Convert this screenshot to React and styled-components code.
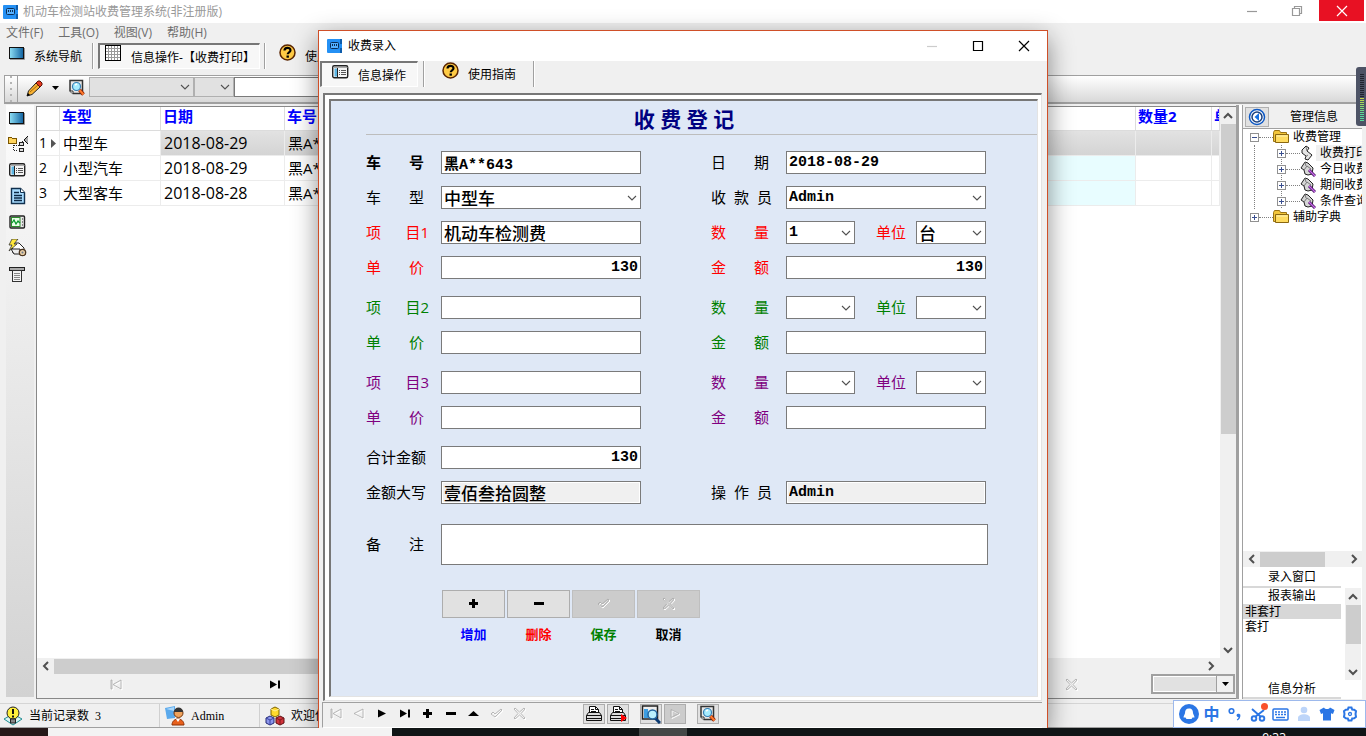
import React from 'react';
import styled, { createGlobalStyle, css } from 'styled-components';

const GlobalStyle = createGlobalStyle`
  * {
    box-sizing: border-box;
  }

  body {
    margin: 0;
    background: #101414;
    font-family: 'Open Sans', 'Noto Sans CJK SC', sans-serif;
    font-size: 12px;
    line-height: 16px;
    color: #000;
  }

  button, input, select, textarea {
    font: inherit;
    color: inherit;
    margin: 0;
  }

  ul {
    list-style: none;
    margin: 0;
    padding: 0;
  }

  svg {
    display: block;
    flex: none;
  }
`;

const Screen = styled.div`
  min-height: 100vh;
  display: flex;
  flex-direction: column;
`;

const MainWindow = styled.div`
  position: relative;
  flex: 1;
  display: flex;
  flex-direction: column;
  background: #f0f0f0;
  overflow: hidden;
`;

const TitleBar = styled.header`
  display: flex;
  align-items: center;
  height: 23px;
  padding: 0 2px 0 3px;
  gap: 4px;
  background: #fff;
  color: #999;
`;

const TitleText = styled.span`
  flex: 1;
  white-space: nowrap;
`;

const CaptionButtons = styled.div`
  display: flex;
  align-self: flex-start;
`;

const CaptionButton = styled.button`
  display: flex;
  align-items: center;
  justify-content: center;
  width: ${(p) => (p.$wide ? 46 : 45)}px;
  height: ${(p) => (p.$wide ? 30 : 21)}px;
  padding: 0;
  border: none;
  background: ${(p) => (p.$danger ? '#e81123' : 'transparent')};
`;

const MenuBar = styled.nav`
  display: flex;
  align-items: center;
  gap: 15px;
  height: 20px;
  padding-left: 6px;
`;

const MenuItem = styled.button`
  padding: 0;
  border: none;
  background: none;
  color: #6d6d6d;
`;

const ToolRow = styled.div`
  display: flex;
  align-items: flex-start;
  height: 32px;
  padding-left: ${(p) => p.$pad}px;
`;

const ToolButton = styled.button`
  display: flex;
  align-items: flex-start;
  gap: ${(p) => p.$gap || 9}px;
  height: 26px;
  padding: 0 ${(p) => (p.$roomy ? '6px 0 11px' : '5px 0 8px')};
  border: 1px solid transparent;
  background: none;
  white-space: nowrap;

  span {
    padding-top: 5px;
  }

  ${(p) => p.$pressed && css`
    border-width: 2px 1px 1px 2px;
    border-style: solid;
    border-color: #777 #fff #fff #777;
    background: #f7f7f7;
    padding: 0 ${p.$roomy ? '11px 0 10px' : '4px 0 5px'};
  `}
`;

const Separator = styled.div`
  width: 2px;
  height: 26px;
  margin: 0 ${(p) => p.$gap || 4}px;
  background: linear-gradient(90deg, #a0a0a0 50%, #fff 50%);
`;

const FilterBar = styled.div`
  display: flex;
  height: 29px;
  margin: 0 5px 0 4px;
  border: 1px solid #a0a0a0;
  border-bottom-width: 2px;
  background: linear-gradient(#fff, #d8d8d8);
`;

const Grip = styled.div`
  width: 13px;
  border-right: 1px solid #a0a0a0;
  background: radial-gradient(circle, #b4b4b4 1px, transparent 1px) center / 6px 6px repeat-y;
  margin-right: 5px;
`;

const IconButton = styled.button`
  display: flex;
  align-items: center;
  justify-content: center;
  width: ${(p) => p.$w || 22}px;
  height: 24px;
  padding: 0;
  border: none;
  background: none;
`;

const FilterInput = styled.input`
  width: 200px;
  height: 20px;
  margin-top: 1px;
  border: 1px solid #7a7a7a;
  background: #fff;
`;

const Body = styled.div`
  flex: 1;
  display: flex;
  padding: 1px 4px 4px 6px;
`;

const SideBar = styled.aside`
  display: flex;
  flex-direction: column;
  align-items: center;
  gap: 8px;
  width: 28px;
  margin: 0 2px 2px 0;
  padding: 4px 5px 0 0;
  background: linear-gradient(#fcfcfc, #d2d2d2);
`;

const SideButton = styled.button`
  display: flex;
  padding: 0;
  border: none;
  background: none;
`;

const GridFrame = styled.main`
  flex: 1;
  min-width: 0;
  display: flex;
  flex-direction: column;
  margin-top: 1px;
  border: 1px solid #888;
  border-right: none;
`;

const GridArea = styled.div`
  flex: 1;
  display: flex;
  background: #fff;
`;

const GridScroll = styled.div`
  flex: 1;
  min-width: 0;
  overflow: hidden;
`;

const DataTable = styled.table`
  width: 100%;
  table-layout: fixed;
  border-collapse: separate;
  border-spacing: 0;
  font-size: 15px;
  line-height: 20px;

  th, td {
    height: 25px;
    padding: 0 0 0 2px;
    border: solid #ececec;
    border-width: 0 1px 1px 0;
    text-align: left;
    white-space: nowrap;
    overflow: hidden;
  }

  th {
    height: 24px;
    color: #00f;
    border-color: #dcdcdc;
    line-height: 18px;
    vertical-align: top;
  }

  tbody td + td {
    padding-left: 3px;
  }
`;

const Cell = styled.td`
  font-size: ${(p) => (p.$date ? 16 : 15)}px;
  background: ${(p) => (p.$active ? 'linear-gradient(#e2e2e2, #d4d4d4)' : p.$cyan ? '#e8fdff' : '#fff')};
`;

const NumCell = styled.td`
  font-size: 14px;

  div {
    display: flex;
    align-items: center;
    gap: 4px;
  }
`;

const VScroll = styled.div`
  display: flex;
  flex-direction: column;
  align-items: center;
  width: 16px;
  background: #f0f0f0;
`;

const HScroll = styled.div`
  display: flex;
  align-items: center;
  height: 16px;
  background: #f0f0f0;
`;

const ScrollEnd = styled.button`
  flex: none;
  display: flex;
  align-items: center;
  justify-content: center;
  width: 17px;
  height: 17px;
  padding: 0;
  border: none;
  background: none;
`;

const VThumb = styled.div`
  width: 15px;
  height: ${(p) => p.$size}px;
  margin-bottom: auto;
  background: #cdcdcd;
`;

const HThumb = styled.div`
  width: ${(p) => p.$size};
  height: 15px;
  margin-right: auto;
  background: #cdcdcd;
`;

const PagerRow = styled.div`
  display: flex;
  align-items: center;
  justify-content: space-between;
  height: 24px;
  padding: 0 1px 2px 67px;
`;

const PagerSlot = styled.div`
  display: flex;
  width: ${(p) => p.$w}px;
  justify-content: space-between;
`;

const PageSelect = styled.div`
  display: grid;
  width: 84px;
  height: 20px;
  border: 2px solid #a0a0a0;

  > * {
    grid-area: 1 / 1;
  }

  select {
    appearance: none;
    width: 100%;
    height: 16px;
    border: 1px solid #fff;
    border-radius: 0;
    background: #e1e1e1;
  }

  span {
    display: flex;
    align-items: center;
    justify-content: center;
    justify-self: end;
    width: 17px;
    border-left: 1px solid #a0a0a0;
    background: #f0f0f0;
    pointer-events: none;
  }
`;

const Splitter = styled.div`
  width: 7px;
  border: solid #a0a0a0;
  border-width: 0 1px 0 3px;
  background: #fff;
`;

const InfoPanel = styled.aside`
  display: flex;
  flex-direction: column;
  width: 119px;
  background: #fff;
  overflow: hidden;
`;

const InfoHeader = styled.div`
  display: flex;
  align-items: center;
  height: 24px;
  padding: 1px 0 0 2px;
  gap: 21px;
  background: #f0f0f0;
  border-bottom: 1px solid #a0a0a0;
`;

const BackButton = styled.button`
  display: flex;
  align-items: center;
  justify-content: center;
  width: 24px;
  height: 20px;
  padding: 0;
  border: 1px solid #b0b0b0;
  background: #e1e1e1;
`;

const Tree = styled.ul`
  flex: 1;
  overflow: hidden;
`;

const TreeChildren = styled.ul`
  margin-left: 11px;
  border-left: 1px dotted #808080;
  background: linear-gradient(#808080 1px, transparent 1px) 26px 0 / 1px 2px repeat-y;
`;

const TreeRow = styled.div`
  display: flex;
  align-items: center;
  height: 16px;
  padding-left: ${(p) => (p.$child ? 22 : 7)}px;
  white-space: nowrap;
`;

const Expander = styled.button`
  flex: none;
  display: flex;
  align-items: center;
  justify-content: center;
  width: 9px;
  height: 9px;
  padding: 0;
  border: 1px solid #919191;
  background: #fff;
`;

const Dots = styled.span`
  flex: none;
  width: 14px;
  border-top: 1px dotted #808080;
`;

const TreeText = styled.span`
  padding-left: 4px;
  background: ${(p) => (p.$selected ? '#f0f0f0' : 'none')};
`;

const PanelTab = styled.button`
  width: 98px;
  height: ${(p) => p.$h}px;
  padding: 0;
  border: none;
  border-bottom: ${(p) => (p.$line ? '2px solid #d8d8d8' : 'none')};
  background: none;
  line-height: 16px;
`;

const ReportBox = styled.div`
  display: flex;
  justify-content: space-between;
  height: 92px;
  padding-right: 1px;
`;

const ReportList = styled.ul`
  width: 98px;

  li {
    height: 15px;
    padding-left: 2px;
    line-height: 15px;
  }

  li:first-child {
    background: #d7d7d7;
  }
`;

const StatusBar = styled.footer`
  display: flex;
  height: 25px;
  border-top: 1px solid #d5d5d5;
  border-bottom: 1px solid #a0a0a0;
`;

const StatusItem = styled.div`
  display: flex;
  align-items: center;
  gap: 6px;
  width: ${(p) => p.$w}px;
  padding-left: ${(p) => p.$pad || 5}px;
  border-right: 1px solid #d0d0d0;
  font-family: 'Liberation Serif', 'Noto Sans CJK SC', serif;
  white-space: nowrap;
`;

const TaskBar = styled.div`
  display: flex;
  height: 8px;
  background: #101516;
  color: #fff;
  overflow: hidden;
`;

const TaskBlock = styled.div`
  width: ${(p) => p.$w}px;
  background: ${(p) => p.$color};
`;

const Clock = styled.time`
  margin: 2px 80px 0 auto;
`;

/* ---- entry dialog ---- */

const Dialog = styled.section`
  position: absolute;
  top: 30px;
  right: 318px;
  bottom: 0;
  left: 318px;
  display: flex;
  flex-direction: column;
  border: 1px solid #cf4f28;
  border-bottom: none;
  background: #f0f0f0;
  box-shadow: 0 8px 24px rgba(0, 0, 0, 0.45);
`;

const DialogTitle = styled.div`
  display: flex;
  align-items: center;
  gap: 5px;
  height: 30px;
  padding-left: 8px;
  background: #fff;
`;

const Sunken = styled.div`
  flex: 1;
  display: flex;
  border: solid;
  border-width: 2px 1px 1px 2px;
  border-color: #777 #e3e3e3 #e3e3e3 #777;
  ${(p) => p.$outer && css`
    margin: 0 5px 1px 4px;
    padding: 4px 3px 3px 4px;
    background: #fff;
  `}
`;

const Form = styled.form`
  flex: 1;
  padding: 0 0 0 35px;
  background: #dfe8f6;
`;

const FormTitle = styled.h1`
  margin: 0 0 16px;
  height: 34px;
  padding-right: 35px;
  border-bottom: 1px solid #bdbdbd;
  color: #000080;
  font-size: 21px;
  line-height: 36px;
  text-align: center;
`;

const FieldRow = styled.div`
  display: grid;
  grid-template-columns: 75px 200px 70px 75px 200px;
  align-items: center;
  height: ${(p) => (p.$tall ? 41 : 23)}px;
  margin-bottom: ${(p) => p.$after || 12}px;
  color: ${(p) => p.$color || '#000'};
`;

const FieldLabel = styled.label`
  display: flex;
  justify-content: space-between;
  width: ${(p) => p.$w || 58}px;
  grid-column: ${(p) => (p.$right ? 4 : 'auto')};
  font-size: 15px;
  line-height: 20px;
  padding-bottom: 2px;
  font-weight: ${(p) => (p.$bold ? 700 : 400)};
  white-space: nowrap;
`;

const fieldBox = css`
  width: 100%;
  height: 23px;
  border: 1px solid #7a7a7a;
  border-radius: 0;
  background: #fff;
  color: #000;
  font-family: ${(p) => (p.$cjk ? '' : "'Liberation Mono', ")}'Noto Sans CJK SC', monospace;
  font-size: ${(p) => (p.$cjk ? 17 : 15)}px;
  font-weight: ${(p) => (p.$cjk ? 500 : 700)};
  line-height: 20px;
`;

const TextField = styled.input`
  ${fieldBox}
  padding: 0 2px;
  text-align: ${(p) => (p.$amount ? 'right' : 'left')};

  &:read-only {
    background: #f0f0f0;
    box-shadow: inset 0 0 0 1px #fff;
  }
`;

const Remark = styled.textarea`
  ${fieldBox}
  grid-column: 2 / 6;
  width: 547px;
  height: 41px;
  resize: none;
`;

const SelectWrap = styled.div`
  display: grid;
  align-items: center;
  width: ${(p) => p.$w || '100%'};
  height: ${(p) => (p.$flat ? '20px' : '23px')};
  margin-top: ${(p) => (p.$flat ? 1 : 0)}px;

  > * {
    grid-area: 1 / 1;
  }

  svg {
    justify-self: end;
    margin-right: 3px;
    pointer-events: none;
  }
`;

const SelectField = styled.select`
  ${fieldBox}
  appearance: none;
  padding: 0 2px;
`;

const FlatSelect = styled.select`
  appearance: none;
  width: 100%;
  height: 20px;
  border: 1px solid #b0b0b0;
  border-radius: 0;
  background: #e1e1e1;
`;

const PairBox = styled.div`
  display: flex;
  align-items: center;
  justify-content: space-between;

  label {
    width: 40px;
    margin-left: 21px;
    padding-bottom: 2px;
    font-size: 15px;
    line-height: 20px;
  }
`;

const ActionRow = styled.div`
  display: flex;
  gap: 2px;
  margin: 25px 0 0 76px;
`;

const Action = styled.div`
  display: flex;
  flex-direction: column;
  gap: 6px;
  width: 63px;
  text-align: center;
  font-size: 13px;
  font-weight: 700;
  line-height: 20px;
  color: ${(p) => p.$color};
`;

const ActionButton = styled.button`
  display: flex;
  align-items: center;
  justify-content: center;
  height: 28px;
  border: 1px solid #adadad;
  background: #e1e1e1;

  &:disabled {
    border-color: #bfbfbf;
    background: #ccc;
  }
`;

const NavBar = styled.div`
  display: flex;
  align-items: center;
  height: 26px;
  margin-right: 5px;
  margin-left: 3px;
  padding: 0 0 2px 1px;
  border-top: 1px solid #a0a0a0;
  border-bottom: 1px solid #fff;
  border-left: 1px solid #a0a0a0;
`;

const NavButton = styled.button`
  display: flex;
  align-items: center;
  justify-content: center;
  width: 23px;
  height: 22px;
  padding: 0;
  border: none;
  background: none;
`;

const PrintGroup = styled.div`
  display: flex;
  gap: 2px;
  margin-left: ${(p) => p.$gap}px;
`;

const PrintButton = styled.button`
  display: flex;
  align-items: center;
  justify-content: center;
  width: 22px;
  height: 20px;
  padding: 0;
  border: 1px solid #adadad;
  background: ${(p) => (p.disabled ? '#ccc' : '#e1e1e1')};
`;

/* ---- floating pieces ---- */

const ImeBar = styled.div`
  position: absolute;
  right: 0;
  bottom: 0;
  display: flex;
  align-items: center;
  height: 28px;
  padding: 0 4px 0 3px;
  border: 1px solid #9db9ec;
  background: #fff;
  color: #2b76e5;
`;

const ImeButton = styled.button`
  display: flex;
  align-items: center;
  justify-content: center;
  width: 23px;
  height: 26px;
  padding: 0;
  border: none;
  background: none;
  font-size: 16px;
  font-weight: 700;
`;

const Meter = styled.div`
  position: absolute;
  top: 67px;
  right: 0;
  width: 10px;
  height: 59px;
  padding: 7px 2px 5px 4px;
  border-radius: 3px 0 0 3px;
  background: #4d5365;

  div {
    height: 100%;
    background: repeating-linear-gradient(transparent 0 1px, #4d5365 1px 2px),
      linear-gradient(#20242e 50%, #c9d63c 50%, #57dc9b 85%);
  }
`;

/* ---- icons ---- */

const AppIcon = () => (
  <svg width="16" height="16" viewBox="0 0 16 16">
    <rect x="0" y="1" width="15" height="14" rx="1" fill="#2490f4" />
    <path d="M13 1h2v5h-2zM13 10h2v5h-2z" fill="#0d5cab" />
    <rect x="3.500" y="4.500" width="8" height="6" rx="1" fill="#54b0ff" stroke="#0b2d55" />
    <path d="M5.500 6v2M7.500 6v2M9.500 6v2" fill="none" stroke="#0b2d55" />
  </svg>
);

const ScreenIcon = () => (
  <svg width="17" height="18" viewBox="0 0 17 18">
    <defs>
      <linearGradient id="screen" x1="0" x2="1">
        <stop offset="0" stopColor="#8fe0f5" />
        <stop offset="1" stopColor="#10619f" />
      </linearGradient>
    </defs>
    <rect x="0.500" y="3.500" width="14" height="11" fill="url(#screen)" stroke="#111" />
    <path d="M1 15.500h14.500V4" fill="none" stroke="#999" />
  </svg>
);

const GridIcon = () => (
  <svg width="17" height="17" viewBox="0 0 17 17" shapeRendering="crispEdges">
    <rect x="0.500" y="0.500" width="15" height="15" fill="#fff" stroke="#000" />
    <path
      d="M1 3.500h14M1 6.500h14M1 9.500h14M1 12.500h14M3.500 1v14M6.500 1v14M9.500 1v14M12.500 1v14"
      stroke="#999"
    />
  </svg>
);

const HelpIcon = () => (
  <svg width="17" height="17" viewBox="0 0 17 17">
    <circle cx="8.500" cy="8.500" r="7.500" fill="#ffcb45" stroke="#5a2500" strokeWidth="1.500" />
    <path d="M5.500 6.500C5.500 3 11.500 3 11.500 6.300c0 2-2.800 2-2.800 4" fill="none" stroke="#000" strokeWidth="2.200" />
    <rect x="7.500" y="11.500" width="2.400" height="2.200" />
  </svg>
);

const PencilIcon = () => (
  <svg width="17" height="17" viewBox="0 0 17 17">
    <path d="M1 16l1.500-5L10 3l4 4-8 7.500z" fill="#f9b233" stroke="#222" />
    <path d="M10 3l2-2h2l2 2v2l-2 2z" fill="#e5391e" stroke="#5c1208" />
    <path d="M4 12l8-7" stroke="#a56a08" />
    <path d="M1 16l1-3 2 2z" />
  </svg>
);

const PreviewIcon = () => (
  <svg width="18" height="18" viewBox="0 0 18 18">
    <path d="M2 1.500h12.500v13H5L2 12z" fill="#e8e8e8" stroke="#333" strokeWidth="1.500" />
    <path d="M2 12h3v3" fill="#fff" stroke="#333" />
    <path d="M11.500 11l4 4.500" stroke="#8b1d00" strokeWidth="3.500" />
    <path d="M11.500 11l4 4.500" stroke="#ff7b2e" strokeWidth="2" />
    <circle cx="8.500" cy="7.500" r="4" fill="#a5ecff" stroke="#357fb5" strokeWidth="1.200" />
    <path d="M7 6l2-1" stroke="#fff" strokeWidth="1.500" />
  </svg>
);

const OrgIcon = () => (
  <svg width="20" height="18" viewBox="0 0 20 18" shapeRendering="crispEdges">
    <path d="M0.500 2.500h3l1 1h4v5h-8z" fill="#ffd45c" stroke="#7a5500" />
    <path d="M5.500 10v5.500H10M6 10.500h5M14 6h2" fill="none" stroke="#222" strokeDasharray="1 1" />
    <path d="M11.500 7.500h4v3h-4zM11.500 13.500h4v3h-4z" fill="#ddd" stroke="#222" />
    <path d="M20 1l-4 4 4 4" fill="#aaa" stroke="#111" />
  </svg>
);

const FormIcon = () => (
  <svg width="17" height="18" viewBox="0 0 17 18">
    <rect x="0.700" y="2.700" width="15" height="12" rx="1.500" fill="#f5f5f5" stroke="#222" strokeWidth="1.400" />
    <path d="M1 4.500h14.500" stroke="#aaa" />
    <rect x="2.500" y="5.500" width="3" height="8" fill="#5bb5e3" />
    <path d="M5.500 5v9" stroke="#222" />
    <path d="M7 7.500h1M9 7.500h5M7 9.500h1M9 9.500h5M7 11.500h1M9 11.500h5" stroke="#555" />
  </svg>
);

const PageIcon = () => (
  <svg width="16" height="18" viewBox="0 0 16 18">
    <path d="M1.500 1.500h9l4 4v11h-13z" fill="#a8dcff" stroke="#10304e" strokeWidth="1.400" />
    <path d="M10.500 1.500v4h4" fill="#fff" stroke="#10304e" />
    <path d="M4 5.500h5M4 8.500h8M4 11h8M4 13.500h8" stroke="#0b2743" strokeWidth="1.400" />
  </svg>
);

const ChartIcon = () => (
  <svg width="17" height="18" viewBox="0 0 17 18">
    <rect x="1" y="3" width="14.500" height="12" rx="1" fill="#e9e9e9" stroke="#222" strokeWidth="1.400" />
    <rect x="2.500" y="4.500" width="8.500" height="9" fill="#eaffea" stroke="#2c8c2c" />
    <path d="M3 10l2-3 2 4 2-3 2 2" fill="none" stroke="#0a9a2c" strokeWidth="1.300" />
    <path d="M13 6h1M13 9h1M13 12h1" stroke="#222" />
  </svg>
);

const FlashIcon = () => (
  <svg width="20" height="18" viewBox="0 0 20 18">
    <path d="M4 4h7l5 5v5H5z" fill="#fff" stroke="#222" />
    <path d="M4 0L1 6h3L1 12l8-7H6l4-5z" fill="#ffe83b" stroke="#333" strokeWidth="0.800" />
    <path d="M3 10h9v5H6z" fill="#eee" stroke="#222" />
    <circle cx="14.500" cy="13.500" r="3.200" fill="#e6cba3" stroke="#4a3520" strokeWidth="1.300" />
    <circle cx="14.500" cy="13.500" r="1" fill="#6b7a90" />
  </svg>
);

const PrintoutIcon = () => (
  <svg width="17" height="18" viewBox="0 0 17 18" shapeRendering="crispEdges">
    <path d="M0.500 2.500h15v3h-15z" fill="#aaa" stroke="#222" />
    <path d="M3.500 5.500h9v11h-9z" fill="#f4f4f4" stroke="#333" />
    <path d="M5 8.500h6M5 10.500h6M5 12.500h6M5 14.500h6" stroke="#888" />
  </svg>
);

const FolderIcon = () => (
  <svg width="16" height="14" viewBox="0 0 16 14">
    <path d="M0.500 2.500l1-2h5l1 2h6v9h-13z" fill="#f3c63b" stroke="#9b7415" />
    <path d="M2.500 4.500h13v8h-13z" fill="#ffdc61" stroke="#8a6710" />
    <path d="M3.500 6h11" stroke="#fff3b5" />
  </svg>
);

const ScrollIcon = ({ pen }) => (
  <svg width="16" height="16" viewBox="0 0 16 16">
    {pen ? (
      <>
        <path d="M1 7l4-6 3 1 5 5-1 6-4 1-3-1-1-4z" fill="#d6d6d6" stroke="#222" />
        <path d="M5 1l1 4M4 9l3-4 4 3" fill="none" stroke="#777" />
        <path d="M9 9l6 6" stroke="#4c1767" strokeWidth="3" />
        <path d="M9 9l6 6" stroke="#c86be8" strokeWidth="1.300" />
      </>
    ) : (
      <>
        <path d="M2 5l4-4 3 2-2 3 5 4-4 5-3-1 1-3-4-3z" fill="#e4e4e4" stroke="#222" />
        <path d="M6 2l1 4M5 12l3-2" stroke="#777" />
      </>
    )}
  </svg>
);

const PrinterIcon = ({ run }) => (
  <svg width="18" height="18" viewBox="0 0 18 18">
    <path d="M4.500 8V1.500h6l3 3V8" fill="#fff" stroke="#111" />
    <path d="M10.500 1.500v3h3M6 4.500h3M6 6.500h5" fill="none" stroke="#111" />
    <path d="M1.500 10.500l2-3h11l2 3v5h-15z" fill="#dcdcdc" stroke="#111" />
    <path d="M1.500 10.500h15M2 13.500h14" stroke="#111" />
    {run && <path d="M12 9l6 4-6 4z" fill="#f00" />}
  </svg>
);

const FindIcon = () => (
  <svg width="20" height="20" viewBox="0 0 20 20">
    <path d="M1.500 2h15v13h-15z" fill="#eee" stroke="#222" strokeWidth="1.500" />
    <rect x="3" y="5" width="4" height="9" fill="#3c9de0" />
    <path d="M14 14l5 5" stroke="#0c3b72" strokeWidth="3" />
    <circle cx="11.500" cy="10.500" r="4.500" fill="#b9f1ff" stroke="#20649f" strokeWidth="1.500" />
  </svg>
);

const UserIcon = () => (
  <svg width="20" height="20" viewBox="0 0 20 20">
    <path d="M0 2l10-2v12l-8 1z" fill="#5aa9ec" />
    <path d="M1 3l8-2v4z" fill="#a9d7fb" />
    <path d="M7 19c0-8 12-8 12 0z" fill="#e8601c" stroke="#8e3005" />
    <path d="M11 13l2 3 2-3z" fill="#fff" />
    <circle cx="13.500" cy="7" r="4.500" fill="#f0a35d" stroke="#74340b" />
    <path d="M9 6c0-6 9-6 9 0z" fill="#333" />
  </svg>
);

const BulbIcon = () => (
  <svg width="20" height="20" viewBox="0 0 20 20">
    <path d="M1 13l9-5 9 5-9 6z" fill="#d8f4f4" stroke="#1f8d92" />
    <circle cx="10" cy="7" r="6" fill="#ffef3b" stroke="#222" />
    <path d="M7.500 13h5v4h-5z" fill="#888" stroke="#222" />
    <path d="M10 3v5M10 9.500v2" stroke="#111" strokeWidth="2" />
  </svg>
);

const CubesIcon = () => (
  <svg width="20" height="20" viewBox="0 0 20 20">
    <path d="M1 12l4-2 4 2v5l-4 2-4-2z" fill="#8c96ec" stroke="#242a75" />
    <path d="M1 12l4 2 4-2M5 14v5" fill="none" stroke="#3a43a0" />
    <path d="M11 12l4-2 4 2v5l-4 2-4-2z" fill="#d1343b" stroke="#5f0f13" />
    <path d="M11 12l4 2 4-2M15 14v5" fill="none" stroke="#7e1a1e" />
    <path d="M6 3l4-2 4 2v6l-4 2-4-2z" fill="#ffd92c" stroke="#7c6200" />
    <path d="M6 3l4 2 4-2" fill="none" stroke="#fff09a" />
  </svg>
);

const BackIcon = () => (
  <svg width="18" height="18" viewBox="0 0 18 18">
    <circle cx="9" cy="9" r="7.500" fill="#fff" stroke="#0d58c4" strokeWidth="1.500" />
    <circle cx="9" cy="9" r="5" fill="#fff" stroke="#1b3f7a" strokeWidth="1.500" />
    <path d="M11 5v8L6.500 9z" fill="#1670e0" />
  </svg>
);

const arrowPaths = {
  up: 'M2 8l4-4 4 4',
  down: 'M2 4l4 4 4-4',
  left: 'M8 2L4 6l4 4',
  right: 'M4 2l4 4-4 4',
};

const Arrow = ({ dir, thin }) => (
  <svg width="12" height="12" viewBox="0 0 12 12">
    <path d={arrowPaths[dir]} fill="none" stroke="#505050" strokeWidth={thin ? 1.100 : 2} />
  </svg>
);

const glyphPaths = {
  first: 'M2 2h1v9H2zM12 2v9L4 6.500z',
  prev: 'M11 2v9L2 6.500z',
  next: 'M3 2.500v8l8-4z',
  last: 'M2 2.500v8l7-4zM10 2.500h2v8h-2z',
  plus: 'M5 2h3v3h3v3H8v3H5V8H2V5h3z',
  minus: 'M2 5h10v3H2z',
  up: 'M1 9l5.500-5L12 9z',
  check: 'M1 7l2-2 2 2 6-5 1 1-7 7z',
  cross: 'M2 1l4.500 4L11 1l1 1-4 4.500L12 11l-1 1-4.500-4L2 12l-1-1 4-4.500L1 2z',
};

const Glyph = ({ kind, off }) => (
  <svg width="14" height="14" viewBox="0 0 14 14">
    {off && <path d={glyphPaths[kind]} transform="translate(1 1)" fill="none" stroke="#fff" />}
    <path
      d={glyphPaths[kind]}
      fill={off ? 'none' : '#000'}
      stroke={off ? '#a8a8a8' : 'none'}
      strokeWidth="0.800"
    />
  </svg>
);

const Caret = () => (
  <svg width="7" height="4" viewBox="0 0 7 4"><path d="M0 0h7L3.500 4z" /></svg>
);

const captionPaths = {
  min: 'M1 6.500h10',
  max: 'M1.500 1.500h9v9h-9z',
  restore: 'M1.500 3.500h7v7h-7zM3.500 3.500v-2h7v7h-2',
  close: 'M1 1l10 10M11 1L1 11',
};

const CaptionIcon = ({ kind, color }) => (
  <svg width="12" height="12" viewBox="0 0 12 12">
    <path d={captionPaths[kind]} fill="none" stroke={color} strokeWidth="1.200" />
  </svg>
);

/* ---- data ---- */

const records = [
  { type: '中型车', date: '2018-08-29', plate: '黑A**643' },
  { type: '小型汽车', date: '2018-08-29', plate: '黑A**' },
  { type: '大型客车', date: '2018-08-28', plate: '黑A**' },
];

const extraItems = [
  { no: 1, color: '#f00', name: '机动车检测费', count: '1', unit: '台', sum: '130' },
  { no: 2, color: '#008000', name: '', count: '', unit: '', sum: '' },
  { no: 3, color: '#800080', name: '', count: '', unit: '', sum: '' },
];

const actions = [
  { text: '增加', glyph: 'plus', color: '#00f' },
  { text: '删除', glyph: 'minus', color: '#f00' },
  { text: '保存', glyph: 'check', color: '#008000', off: true },
  { text: '取消', glyph: 'cross', color: '#000', off: true },
];

const navGlyphs = [
  ['first', true], ['prev', true], ['next'], ['last'], ['plus'],
  ['minus'], ['up'], ['check', true], ['cross', true],
];

const Label = ({ parts, ...rest }) => (
  <FieldLabel {...rest}>
    {parts.map((part) => <span key={part}>{part}</span>)}
  </FieldLabel>
);

const Select = ({ id, value, w, cjk, label }) => (
  <SelectWrap $w={w}>
    <SelectField id={id} defaultValue={value} $cjk={cjk} aria-label={label}>
      <option>{value}</option>
    </SelectField>
    <Arrow dir="down" thin />
  </SelectWrap>
);

const ItemFields = ({ item }) => (
  <>
    <FieldRow $color={item.color}>
      <Label htmlFor={`name${item.no}`} parts={['项', `目${item.no}`]} $w={63} />
      <TextField id={`name${item.no}`} defaultValue={item.name} $cjk />
      <Label htmlFor={`count${item.no}`} parts={['数', '量']} $right />
      <PairBox>
        <Select id={`count${item.no}`} value={item.count} w="69px" />
        <label htmlFor={`unit${item.no}`}>单位</label>
        <Select id={`unit${item.no}`} value={item.unit} w="70px" cjk />
      </PairBox>
    </FieldRow>
    <FieldRow $color={item.color} $after={17}>
      <Label htmlFor={`price${item.no}`} parts={['单', '价']} />
      <TextField id={`price${item.no}`} defaultValue={item.sum} $amount />
      <Label htmlFor={`sum${item.no}`} parts={['金', '额']} $right />
      <TextField id={`sum${item.no}`} defaultValue={item.sum} $amount />
    </FieldRow>
  </>
);

const EntryDialog = () => (
  <Dialog role="dialog" aria-label="收费录入">
    <DialogTitle>
      <AppIcon />
      <TitleText>收费录入</TitleText>
      <CaptionButtons>
        <CaptionButton $wide aria-label="最小化"><CaptionIcon kind="min" color="#ccc" /></CaptionButton>
        <CaptionButton $wide aria-label="最大化"><CaptionIcon kind="max" color="#000" /></CaptionButton>
        <CaptionButton $wide aria-label="关闭"><CaptionIcon kind="close" color="#000" /></CaptionButton>
      </CaptionButtons>
    </DialogTitle>
    <ToolRow $pad={1}>
      <ToolButton $pressed $roomy>
        <FormIcon />
        <span>信息操作</span>
      </ToolButton>
      <Separator $gap={5} />
      <ToolButton $roomy>
        <HelpIcon />
        <span>使用指南</span>
      </ToolButton>
      <Separator $gap={10} />
    </ToolRow>
    <Sunken $outer>
      <Sunken>
        <Form onSubmit={(e) => e.preventDefault()}>
          <FormTitle>收 费 登 记</FormTitle>
          <FieldRow>
            <Label htmlFor="plate" parts={['车', '号']} $bold />
            <TextField id="plate" defaultValue="黑A**643" />
            <Label htmlFor="date" parts={['日', '期']} $right />
            <TextField id="date" defaultValue="2018-08-29" />
          </FieldRow>
          <FieldRow>
            <Label htmlFor="type" parts={['车', '型']} />
            <Select id="type" value="中型车" cjk />
            <Label htmlFor="cashier" parts={['收', '款', '员']} $w={61} $right />
            <Select id="cashier" value="Admin" />
          </FieldRow>
          {extraItems.map((item) => <ItemFields key={item.no} item={item} />)}
          <FieldRow>
            <Label htmlFor="total" parts={['合计金额']} />
            <TextField id="total" defaultValue="130" $amount />
          </FieldRow>
          <FieldRow $after={20}>
            <Label htmlFor="words" parts={['金额大写']} />
            <TextField id="words" defaultValue="壹佰叁拾圆整" readOnly $cjk />
            <Label htmlFor="operator" parts={['操', '作', '员']} $w={61} $right />
            <TextField id="operator" defaultValue="Admin" readOnly />
          </FieldRow>
          <FieldRow $tall>
            <Label htmlFor="remark" parts={['备', '注']} />
            <Remark id="remark" />
          </FieldRow>
          <ActionRow>
            {actions.map((a) => (
              <Action key={a.text} $color={a.color}>
                <ActionButton type="button" disabled={a.off} aria-label={a.text}>
                  <Glyph kind={a.glyph} off={a.off} />
                </ActionButton>
                <span>{a.text}</span>
              </Action>
            ))}
          </ActionRow>
        </Form>
      </Sunken>
    </Sunken>
    <NavBar>
      {navGlyphs.map(([kind, off]) => (
        <NavButton key={kind} disabled={off} aria-label={kind}>
          <Glyph kind={kind} off={off} />
        </NavButton>
      ))}
      <PrintGroup $gap={52}>
        <PrintButton aria-label="打印"><PrinterIcon /></PrintButton>
        <PrintButton aria-label="直接打印"><PrinterIcon run /></PrintButton>
      </PrintGroup>
      <PrintGroup $gap={11}>
        <PrintButton aria-label="查找"><FindIcon /></PrintButton>
        <PrintButton disabled aria-label="运行"><Glyph kind="next" off /></PrintButton>
      </PrintGroup>
      <PrintGroup $gap={11}>
        <PrintButton aria-label="预览"><PreviewIcon /></PrintButton>
      </PrintGroup>
    </NavBar>
  </Dialog>
);

const RecordGrid = () => (
  <GridFrame>
    <GridArea>
      <GridScroll>
        <DataTable>
          <colgroup>
            <col width="23" />
            <col width="101" />
            <col width="124" />
            <col width="100" />
            <col />
            <col width="76" />
            <col width="8" />
          </colgroup>
          <thead>
            <tr>
              <th /><th>车型</th><th>日期</th><th>车号</th><th /><th>数量2</th><th>单价2</th>
            </tr>
          </thead>
          <tbody>
            {records.map((r, i) => (
              <tr key={r.type}>
                <NumCell>
                  <div>
                    {i + 1}
                    {i === 0 && <svg width="5" height="9" viewBox="0 0 5 9"><path d="M0 0v9l5-4.500z" fill="#555" /></svg>}
                  </div>
                </NumCell>
                <Cell>{r.type}</Cell>
                <Cell $active={i === 0} $date>{r.date}</Cell>
                <Cell $active={i === 0}>{r.plate}</Cell>
                <Cell $active={i === 0} $cyan />
                <Cell $active={i === 0} />
                <Cell $active={i === 0} />
              </tr>
            ))}
          </tbody>
        </DataTable>
      </GridScroll>
      <VScroll>
        <ScrollEnd aria-label="上"><Arrow dir="up" /></ScrollEnd>
        <VThumb $size={310} />
        <ScrollEnd aria-label="下"><Arrow dir="down" /></ScrollEnd>
      </VScroll>
    </GridArea>
    <HScroll>
      <ScrollEnd aria-label="左"><Arrow dir="left" /></ScrollEnd>
      <HThumb $size="60%" />
      <ScrollEnd aria-label="右"><Arrow dir="right" /></ScrollEnd>
      <PagerSlot $w={17} />
    </HScroll>
    <PagerRow>
      <PagerSlot $w={182}>
        <NavButton disabled aria-label="首条"><Glyph kind="first" off /></NavButton>
        <NavButton aria-label="末条"><Glyph kind="last" /></NavButton>
      </PagerSlot>
      <PagerSlot $w={175}>
        <NavButton disabled aria-label="取消"><Glyph kind="cross" off /></NavButton>
        <PageSelect>
          <select aria-label="页" />
          <span><Caret /></span>
        </PageSelect>
      </PagerSlot>
    </PagerRow>
  </GridFrame>
);

const PlusMark = ({ open }) => (
  <svg width="7" height="7" viewBox="0 0 7 7">
    <path d={open ? 'M1 3.500h5' : 'M1 3.500h5M3.500 1v5'} stroke="#3a4f8f" />
  </svg>
);

const SidePanel = () => (
  <InfoPanel>
    <InfoHeader>
      <BackButton aria-label="返回"><BackIcon /></BackButton>
      <span>管理信息</span>
    </InfoHeader>
    <Tree>
      <li>
        <TreeRow>
          <Expander aria-label="收起"><PlusMark open /></Expander>
          <Dots />
          <FolderIcon />
          <TreeText>收费管理</TreeText>
        </TreeRow>
        <TreeChildren>
          {['收费打印', '今日收费', '期间收费', '条件查询'].map((text, i) => (
            <li key={text}>
              <TreeRow $child>
                <Expander aria-label="展开"><PlusMark /></Expander>
                <Dots />
                <ScrollIcon pen={i > 0} />
                <TreeText $selected={i === 0}>{text}</TreeText>
              </TreeRow>
            </li>
          ))}
        </TreeChildren>
      </li>
      <li>
        <TreeRow>
          <Expander aria-label="展开"><PlusMark /></Expander>
          <Dots />
          <FolderIcon />
          <TreeText>辅助字典</TreeText>
        </TreeRow>
      </li>
    </Tree>
    <HScroll>
      <ScrollEnd aria-label="左"><Arrow dir="left" /></ScrollEnd>
      <HThumb $size="65px" />
      <ScrollEnd aria-label="右"><Arrow dir="right" /></ScrollEnd>
    </HScroll>
    <PanelTab $h={21} $line>录入窗口</PanelTab>
    <ReportBox>
      <div>
        <PanelTab $h={16}>报表输出</PanelTab>
        <ReportList>
          <li>非套打</li>
          <li>套打</li>
        </ReportList>
      </div>
      <VScroll>
        <ScrollEnd aria-label="上"><Arrow dir="up" /></ScrollEnd>
        <VThumb $size={39} />
        <ScrollEnd aria-label="下"><Arrow dir="down" /></ScrollEnd>
      </VScroll>
    </ReportBox>
    <PanelTab $h={19} $line>信息分析</PanelTab>
  </InfoPanel>
);

const ImeTools = () => (
  <ImeBar>
    <ImeButton aria-label="账号">
      <svg width="20" height="20" viewBox="0 0 20 20">
        <circle cx="10" cy="10" r="10" fill="#2b76e5" />
        <path
          d="M10 4.500c-3 0-4 2-4 4.500 0 1.500-1.500 2.500-1.500 4.500h2l1 1.500h5l1-1.500h2c0-2-1.500-3-1.500-4.500 0-2.500-1-4.500-4-4.500z"
          fill="#fff"
        />
      </svg>
    </ImeButton>
    <ImeButton>中</ImeButton>
    <ImeButton aria-label="标点">
      <svg width="14" height="14" viewBox="0 0 14 14">
        <circle cx="3.500" cy="4" r="2.300" fill="none" stroke="#2b76e5" strokeWidth="1.600" />
        <path d="M8.500 8a2 2 0 1 1 3.800 1.500c-.3 2-1.300 3-3 4l-.5-1c1-.6 1.600-1.200 1.800-2.200C9.300 10 8.500 9.300 8.500 8z" fill="#2b76e5" />
      </svg>
    </ImeButton>
    <ImeButton aria-label="截图">
      <svg width="20" height="22" viewBox="0 0 20 22">
        <g fill="none" stroke="#2b76e5" strokeWidth="1.900">
          <circle cx="6" cy="15.500" r="2.300" />
          <circle cx="14" cy="15.500" r="2.300" />
          <path d="M4 6l9 8M16 7l-9 7" />
        </g>
        <circle cx="16.500" cy="3.500" r="3.500" fill="#f9512c" />
      </svg>
    </ImeButton>
    <ImeButton aria-label="键盘">
      <svg width="17" height="13" viewBox="0 0 17 13">
        <rect x="1" y="1" width="15" height="11" rx="1" fill="none" stroke="#2b76e5" strokeWidth="1.500" />
        <path d="M3 4h11M3 6.500h11" stroke="#2b76e5" strokeWidth="1.400" strokeDasharray="2 1" />
        <path d="M4 9.500h9" stroke="#2b76e5" strokeWidth="1.400" />
      </svg>
    </ImeButton>
    <ImeButton aria-label="用户">
      <svg width="14" height="16" viewBox="0 0 14 16">
        <circle cx="7" cy="4" r="3.300" fill="#bdd5f9" />
        <path d="M1 15v-3c0-5 12-5 12 0v3z" fill="#bdd5f9" />
      </svg>
    </ImeButton>
    <ImeButton aria-label="皮肤">
      <svg width="16" height="14" viewBox="0 0 16 14">
        <path d="M5 0.500c1 2 5 2 6 0l4.500 2.500-1.500 4-2-.7V13.500H4V6.300L2 7 .5 3z" fill="#2b76e5" />
      </svg>
    </ImeButton>
    <ImeButton aria-label="设置">
      <svg width="16" height="16" viewBox="0 0 16 16">
        <path
          d="M6.500 1.500h3l.7 2 2 .3 1.800 1.400L13.500 8l.5 2.800-1.800 1.400-2 .3-.7 2h-3l-.7-2-2-.3L2 10.800 2.500 8 2 5.200l1.800-1.400 2-.3z"
          fill="none"
          stroke="#2b76e5"
          strokeWidth="2"
        />
        <circle cx="8" cy="8" r="1.500" fill="none" stroke="#2b76e5" strokeWidth="1.300" />
      </svg>
    </ImeButton>
  </ImeBar>
);

const App = () => {
  return (
    <Screen>
      <GlobalStyle />
      <MainWindow>
        <TitleBar>
          <AppIcon />
          <TitleText>机动车检测站收费管理系统(非注册版)</TitleText>
          <CaptionButtons>
            <CaptionButton aria-label="最小化"><CaptionIcon kind="min" color="#999" /></CaptionButton>
            <CaptionButton aria-label="还原"><CaptionIcon kind="restore" color="#999" /></CaptionButton>
            <CaptionButton aria-label="关闭" $danger><CaptionIcon kind="close" color="#fff" /></CaptionButton>
          </CaptionButtons>
        </TitleBar>
        <MenuBar>
          {['文件(F)', '工具(O)', '视图(V)', '帮助(H)'].map((text) => (
            <MenuItem key={text}>{text}</MenuItem>
          ))}
        </MenuBar>
        <ToolRow $pad={0}>
          <ToolButton $gap={8}>
            <ScreenIcon />
            <span>系统导航</span>
          </ToolButton>
          <Separator />
          <ToolButton $pressed>
            <GridIcon />
            <span>信息操作-【收费打印】</span>
          </ToolButton>
          <Separator />
          <ToolButton>
            <HelpIcon />
            <span>使用指南</span>
          </ToolButton>
        </ToolRow>
        <FilterBar>
          <Grip />
          <IconButton aria-label="编辑"><PencilIcon /></IconButton>
          <IconButton aria-label="更多" $w={20}><Caret /></IconButton>
          <IconButton aria-label="预览" $w={24}><PreviewIcon /></IconButton>
          <SelectWrap $w="105px" $flat>
            <FlatSelect aria-label="字段" />
            <Arrow dir="down" thin />
          </SelectWrap>
          <SelectWrap $w="40px" $flat>
            <FlatSelect aria-label="条件" />
            <Arrow dir="down" thin />
          </SelectWrap>
          <FilterInput aria-label="关键字" />
        </FilterBar>
        <Body>
          <SideBar>
            <SideButton aria-label="导航"><ScreenIcon /></SideButton>
            <SideButton aria-label="结构"><OrgIcon /></SideButton>
            <SideButton aria-label="表单"><FormIcon /></SideButton>
            <SideButton aria-label="文档"><PageIcon /></SideButton>
            <SideButton aria-label="图表"><ChartIcon /></SideButton>
            <SideButton aria-label="快捷"><FlashIcon /></SideButton>
            <SideButton aria-label="输出"><PrintoutIcon /></SideButton>
          </SideBar>
          <RecordGrid />
          <Splitter />
          <SidePanel />
        </Body>
        <StatusBar>
          <StatusItem $w={160} $pad={3}><BulbIcon /><span>当前记录数&nbsp; 3</span></StatusItem>
          <StatusItem $w={100}><UserIcon /><span>Admin</span></StatusItem>
          <StatusItem $w={400}><CubesIcon /><span>欢迎使用</span></StatusItem>
        </StatusBar>
        <EntryDialog />
        <Meter><div /></Meter>
        <ImeTools />
      </MainWindow>
      <TaskBar>
        <TaskBlock $w={48} $color="#261818" />
        <TaskBlock $w={344} $color="#f3f3f3" />
        <TaskBlock $w={247} $color="#101516" />
        <TaskBlock $w={48} $color="#444847" />
        <Clock>9:33</Clock>
      </TaskBar>
    </Screen>
  );
};

export default App;
